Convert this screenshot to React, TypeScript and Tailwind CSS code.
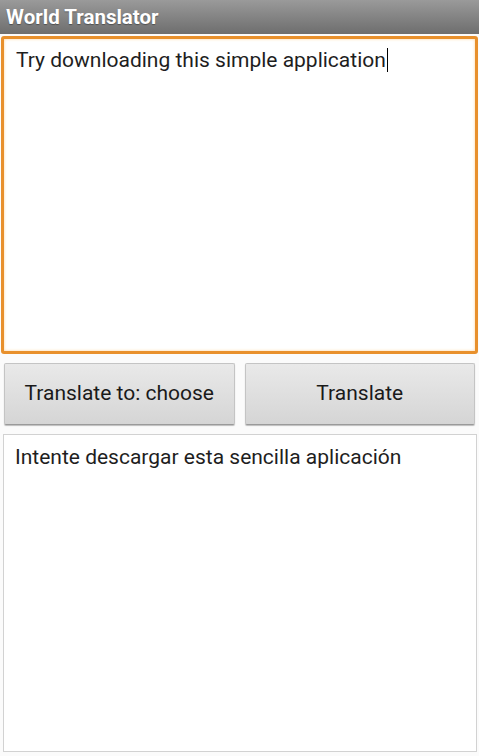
import React from 'react';

const App: React.FC = () => {
  const source = 'Try downloading this simple application';
  const output = 'Intente descargar esta sencilla aplicación';

  return (
    <div className="flex h-[756px] w-[479px] flex-col bg-[#fbfbfb] font-['Roboto',sans-serif]">
      {/* Title bar */}
      <div className="flex h-[34px] shrink-0 items-center bg-gradient-to-b from-[#9a9a9a] to-[#6e6e6e] px-[6px]">
        <h1 className="text-[20.5px] font-bold leading-none text-white [text-shadow:0_1px_1px_rgba(0,0,0,0.35)]">
          World Translator
        </h1>
      </div>

      {/* Input (focused) */}
      <div className="mt-[2px] px-[1px]">
        <div className="h-[318px] w-full rounded-[3px] border-[3px] border-[#e8902c] bg-white px-[12px] py-[8px] text-[21px] leading-[26px] text-[#1e1e1e] shadow-[inset_0_0_3px_rgba(255,180,80,0.6)]">
          {source}
          <span className="ml-[1px] inline-block h-[24px] w-[1.5px] align-[-5px] bg-black" />
        </div>
      </div>

      {/* Buttons */}
      <div className="mt-[9px] grid grid-cols-2 gap-[10px] px-[4px]">
        <button className="h-[62px] rounded-[2px] border border-[#c4c4c4] border-b-[#9a9a9a] bg-gradient-to-b from-[#e9e9e9] to-[#d5d5d5] text-[21px] text-[#1a1a1a] shadow-[0_1px_1px_rgba(0,0,0,0.25)]">
          Translate to: choose
        </button>
        <button className="h-[62px] rounded-[2px] border border-[#c4c4c4] border-b-[#9a9a9a] bg-gradient-to-b from-[#e9e9e9] to-[#d5d5d5] text-[21px] text-[#1a1a1a] shadow-[0_1px_1px_rgba(0,0,0,0.25)]">
          Translate
        </button>
      </div>

      {/* Output */}
      <div className="mt-[9px] px-[3px]">
        <div className="h-[318px] w-[474px] border border-[#d2d2d2] bg-white px-[11px] py-[9px] text-[21px] leading-[26px] text-[#1e1e1e]">
          {output}
        </div>
      </div>
    </div>
  );
};

export default App;
